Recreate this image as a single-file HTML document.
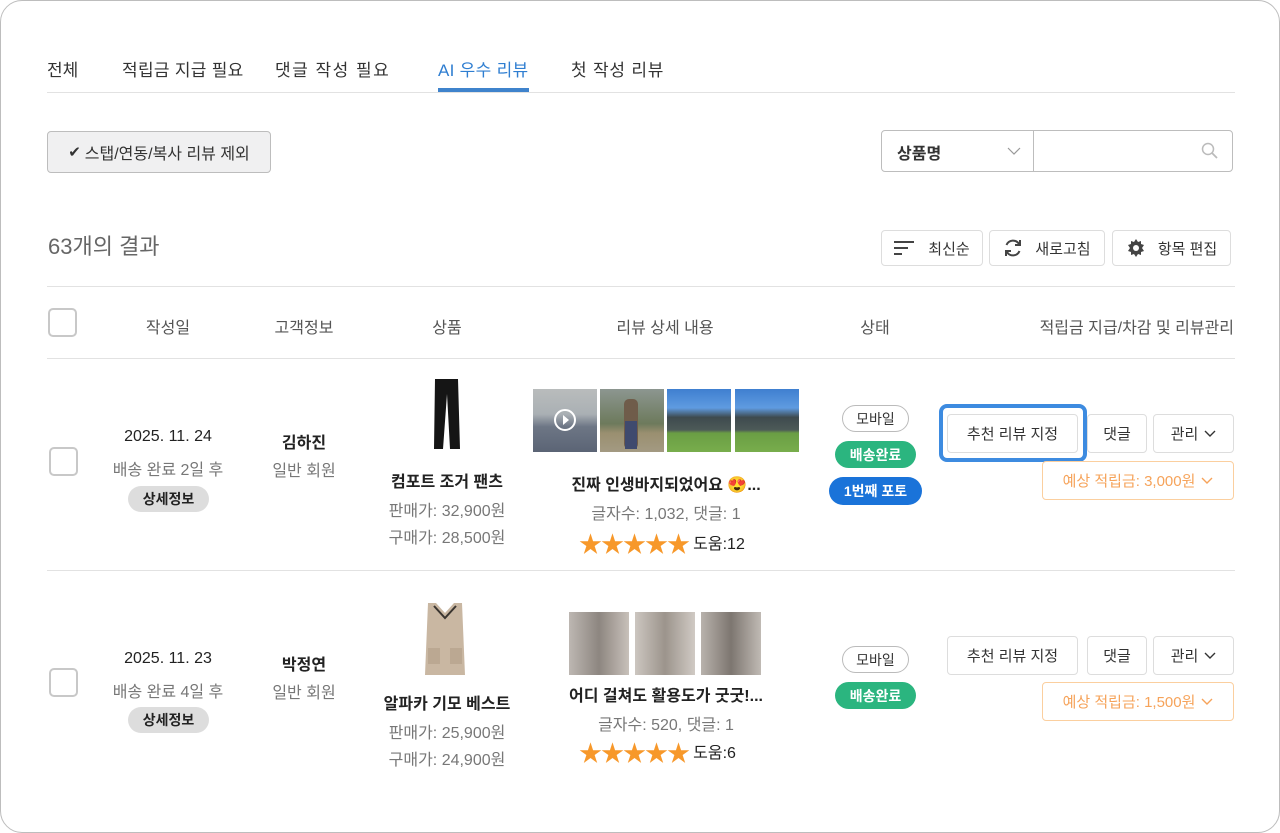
<!DOCTYPE html>
<html><head><meta charset="utf-8"><style>
*{box-sizing:border-box;margin:0;padding:0}
body{width:1280px;height:833px;background:#fff;font-family:"Liberation Sans","Noto Sans CJK KR",sans-serif;position:relative;overflow:hidden;color:#222}
.frame{position:absolute;left:0;top:0;width:1280px;height:833px;border:1.5px solid #bdbdbd;border-radius:22px}
.a{position:absolute}
.t{position:absolute;white-space:nowrap;font-size:15px}
.c{transform:translateX(-50%);text-align:center}
.tab{font-size:17px;color:#333;top:56px}
.btn{position:absolute;border:1px solid #ddd;border-radius:4px;background:#fff;font-size:15px;display:flex;align-items:center;justify-content:center;gap:6px;color:#333}
.cb{position:absolute;width:29px;height:29px;border:2.5px solid #c8c8c8;border-radius:5px;background:#fff}
.gray{color:#777}
.pill{position:absolute;border-radius:14px;font-size:14px;display:flex;align-items:center;justify-content:center;font-weight:bold}
.star{color:#f7982a;font-size:23px;letter-spacing:-1px}
.img{position:absolute}
.hd{font-size:16px;color:#555;top:314px}
</style></head><body>
<div class="frame"></div>
<!-- tabs -->
<div class="t tab" style="left:47px">전체</div>
<div class="t tab" style="left:122px;letter-spacing:0.3px">적립금 지급 필요</div>
<div class="t tab" style="left:275px;letter-spacing:1.5px">댓글 작성 필요</div>
<div class="t tab" style="left:438px;color:#2f7ed1;letter-spacing:0.3px">AI 우수 리뷰</div>
<div class="t tab" style="left:571px;letter-spacing:0.8px">첫 작성 리뷰</div>
<div class="a" style="left:47px;top:92px;width:1188px;height:1px;background:#e2e2e2"></div>
<div class="a" style="left:438px;top:88px;width:91px;height:4px;background:#3f83cc"></div>
<!-- filter -->
<div class="btn" style="left:47px;top:131px;width:224px;height:42px;background:#f0f0f1;border-color:#bdbdbd;font-size:16px;gap:4px"><span style="font-size:15px">✔</span>스탭/연동/복사 리뷰 제외</div>
<div class="a" style="left:881px;top:130px;width:352px;height:42px;border:1px solid #bdbdbd;border-radius:4px"></div>
<div class="a" style="left:1033px;top:130px;width:1px;height:42px;background:#bdbdbd"></div>
<div class="t" style="left:897px;top:140px;font-size:16px;font-weight:bold;color:#333">상품명</div>
<svg class="a" style="left:1007px;top:146px" width="14" height="10"><path d="M1 2l6 6 6-6" fill="none" stroke="#999" stroke-width="1.2"/></svg>
<svg class="a" style="left:1201px;top:142px" width="18" height="18"><circle cx="7" cy="7" r="5.5" fill="none" stroke="#bbb" stroke-width="1.5"/><path d="M11 11l5 5" stroke="#bbb" stroke-width="1.8"/></svg>
<!-- result -->
<div class="t" style="left:48px;top:229px;font-size:22px;color:#666">63개의 결과</div>
<div class="btn" style="left:881px;top:230px;width:102px;height:36px;gap:14px"><svg width="20" height="14"><path d="M0 1h20M0 7h14M0 13h8" stroke="#444" stroke-width="2"/></svg>최신순</div>
<div class="btn" style="left:989px;top:230px;width:116px;height:36px;gap:12px"><svg width="20" height="20" viewBox="0 0 20 20"><path d="M16 6A7 7 0 0 0 3.5 7M4 14a7 7 0 0 0 12.5-1" fill="none" stroke="#444" stroke-width="2"/><path d="M17 2v5h-5M3 18v-5h5" fill="none" stroke="#444" stroke-width="2"/></svg>새로고침</div>
<div class="btn" style="left:1112px;top:230px;width:119px;height:36px;gap:12px"><svg width="20" height="20" viewBox="0 0 20 20"><path d="M10 1l2 3 3-1 0 3 3 1-2 3 2 3-3 1 0 3-3-1-2 3-2-3-3 1 0-3-3-1 2-3-2-3 3-1 0-3 3 1z" fill="#444"/><circle cx="10" cy="10" r="3" fill="#fff"/></svg>항목 편집</div>
<!-- header -->
<div class="a" style="left:47px;top:286px;width:1188px;height:1px;background:#e2e2e2"></div>
<div class="a" style="left:47px;top:358px;width:1188px;height:1px;background:#e2e2e2"></div>
<div class="cb" style="left:48px;top:308px"></div>
<div class="t c hd" style="left:168px">작성일</div>
<div class="t c hd" style="left:304px">고객정보</div>
<div class="t c hd" style="left:447px">상품</div>
<div class="t c hd" style="left:665px">리뷰 상세 내용</div>
<div class="t c hd" style="left:875px">상태</div>
<div class="t hd" style="right:46px">적립금 지급/차감 및 리뷰관리</div>
<!-- row1 -->
<div class="cb" style="left:49px;top:447px"></div>
<div class="t c" style="left:168px;top:428px;font-size:16px">2025. 11. 24</div>
<div class="t c gray" style="left:168px;top:456px;font-size:16px">배송 완료 2일 후</div>
<div class="pill" style="left:128px;top:486px;width:81px;height:26px;background:#ddd;font-size:14px">상세정보</div>
<div class="t c" style="left:304px;top:429px;font-weight:bold;font-size:16px">김하진</div>
<div class="t c gray" style="left:304px;top:457px;font-size:16px">일반 회원</div>
<svg class="img" style="left:425px;top:378px" width="45" height="72"><path d="M10 1h23l2 70h-10l-3-55-4 55H9z" fill="#151515"/></svg>
<div class="t c" style="left:447px;top:468px;font-weight:bold;font-size:16px">컴포트 조거 팬츠</div>
<div class="t c gray" style="left:447px;top:497px;font-size:16px">판매가: 32,900원</div>
<div class="t c gray" style="left:447px;top:524px;font-size:16px">구매가: 28,500원</div>
<div class="img" style="left:533px;top:389px;width:64px;height:63px;background:linear-gradient(#b9bcbc 0%,#aab0b4 40%,#6d7685 60%,#5b6475 100%)"></div>
<svg class="img" style="left:553px;top:408px" width="24" height="24"><circle cx="12" cy="12" r="10" fill="none" stroke="#fff" stroke-width="2"/><path d="M10 7l6 5-6 5z" fill="#fff"/></svg>
<div class="img" style="left:600px;top:389px;width:64px;height:63px;background:linear-gradient(#8c9690 0%,#6d7a5c 55%,#9a8f70 70%,#a39a82 100%)"><div class="a" style="left:24px;top:10px;width:14px;height:50px;background:#6f5c4a;border-radius:5px"></div><div class="a" style="left:25px;top:32px;width:12px;height:28px;background:#3f4a6e"></div></div>
<div class="img" style="left:667px;top:389px;width:64px;height:63px;background:linear-gradient(#3f7fd0 0%,#5f9be0 30%,#3e4a4e 45%,#4d5a58 65%,#6a9e44 70%,#78ad4c 100%)"></div>
<div class="img" style="left:735px;top:389px;width:64px;height:63px;background:linear-gradient(#3f7fd0 0%,#5f9be0 30%,#3e4a4e 45%,#4d5a58 65%,#6a9e44 70%,#78ad4c 100%)"></div>
<div class="t c" style="left:666px;top:471px;font-weight:bold;font-size:16px">진짜 인생바지되었어요 😍...</div>
<div class="t c gray" style="left:666px;top:500px;font-size:16px">글자수: 1,032, 댓글: 1</div>
<div class="t" style="left:579px;top:525px"><span class="star">★★★★★</span> <span style="font-size:16px;position:relative;top:-3px">도움:12</span></div>
<div class="pill" style="left:842px;top:405px;width:67px;height:27px;border:1px solid #bbb;font-weight:normal;color:#333">모바일</div>
<div class="pill" style="left:835px;top:441px;width:81px;height:27px;background:#2bb57f;color:#fff">배송완료</div>
<div class="pill" style="left:829px;top:477px;width:93px;height:28px;background:#1a73d9;color:#fff">1번째 포토</div>
<div class="a" style="left:939px;top:404px;width:148px;height:58px;border:4px solid #3d8be0;border-radius:8px"></div>
<div class="btn" style="left:947px;top:414px;width:131px;height:39px">추천 리뷰 지정</div>
<div class="btn" style="left:1087px;top:414px;width:60px;height:39px">댓글</div>
<div class="btn" style="left:1153px;top:414px;width:81px;height:39px">관리 <svg width="12" height="8"><path d="M1 1l5 5 5-5" fill="none" stroke="#333" stroke-width="1.4"/></svg></div>
<div class="btn" style="left:1042px;top:461px;width:192px;height:39px;border-color:#fbcf9f;color:#f6a35a">예상 적립금: 3,000원 <svg width="12" height="8"><path d="M1 1l5 5 5-5" fill="none" stroke="#f6a35a" stroke-width="1.4"/></svg></div>
<div class="a" style="left:47px;top:570px;width:1188px;height:1px;background:#e2e2e2"></div>
<!-- row2 -->
<div class="cb" style="left:49px;top:668px"></div>
<div class="t c" style="left:168px;top:650px;font-size:16px">2025. 11. 23</div>
<div class="t c gray" style="left:168px;top:678px;font-size:16px">배송 완료 4일 후</div>
<div class="pill" style="left:128px;top:707px;width:81px;height:26px;background:#ddd;font-size:14px">상세정보</div>
<div class="t c" style="left:304px;top:651px;font-weight:bold;font-size:16px">박정연</div>
<div class="t c gray" style="left:304px;top:679px;font-size:16px">일반 회원</div>
<svg class="img" style="left:420px;top:600px" width="50" height="76"><path d="M8 3h8l9 10 9-10h8l3 72H5z" fill="#c9b7a2"/><path d="M14 6l11 12 11-12" fill="none" stroke="#3a3530" stroke-width="2"/><rect x="8" y="48" width="12" height="16" fill="#bba892"/><rect x="30" y="48" width="12" height="16" fill="#bba892"/></svg>
<div class="t c" style="left:447px;top:690px;font-weight:bold;font-size:16px">알파카 기모 베스트</div>
<div class="t c gray" style="left:447px;top:719px;font-size:16px">판매가: 25,900원</div>
<div class="t c gray" style="left:447px;top:746px;font-size:16px">구매가: 24,900원</div>
<div class="img" style="left:569px;top:612px;width:60px;height:63px;background:linear-gradient(90deg,#bdb7b2,#8d8680 50%,#c8c1ba)"></div>
<div class="img" style="left:635px;top:612px;width:60px;height:63px;background:linear-gradient(90deg,#ccc6c0,#9c948c 50%,#d0cac4)"></div>
<div class="img" style="left:701px;top:612px;width:60px;height:63px;background:linear-gradient(90deg,#b8b2ac,#7d7670 50%,#c0bab4)"></div>
<div class="t c" style="left:666px;top:682px;font-weight:bold;font-size:16px">어디 걸쳐도 활용도가 굿굿!...</div>
<div class="t c gray" style="left:666px;top:711px;font-size:16px">글자수: 520, 댓글: 1</div>
<div class="t" style="left:579px;top:734px"><span class="star">★★★★★</span> <span style="font-size:16px;position:relative;top:-3px">도움:6</span></div>
<div class="pill" style="left:842px;top:646px;width:67px;height:27px;border:1px solid #bbb;font-weight:normal;color:#333">모바일</div>
<div class="pill" style="left:835px;top:682px;width:81px;height:27px;background:#2bb57f;color:#fff">배송완료</div>
<div class="btn" style="left:947px;top:636px;width:131px;height:39px">추천 리뷰 지정</div>
<div class="btn" style="left:1087px;top:636px;width:60px;height:39px">댓글</div>
<div class="btn" style="left:1153px;top:636px;width:81px;height:39px">관리 <svg width="12" height="8"><path d="M1 1l5 5 5-5" fill="none" stroke="#333" stroke-width="1.4"/></svg></div>
<div class="btn" style="left:1042px;top:682px;width:192px;height:39px;border-color:#fbcf9f;color:#f6a35a">예상 적립금: 1,500원 <svg width="12" height="8"><path d="M1 1l5 5 5-5" fill="none" stroke="#f6a35a" stroke-width="1.4"/></svg></div>
</body></html>
